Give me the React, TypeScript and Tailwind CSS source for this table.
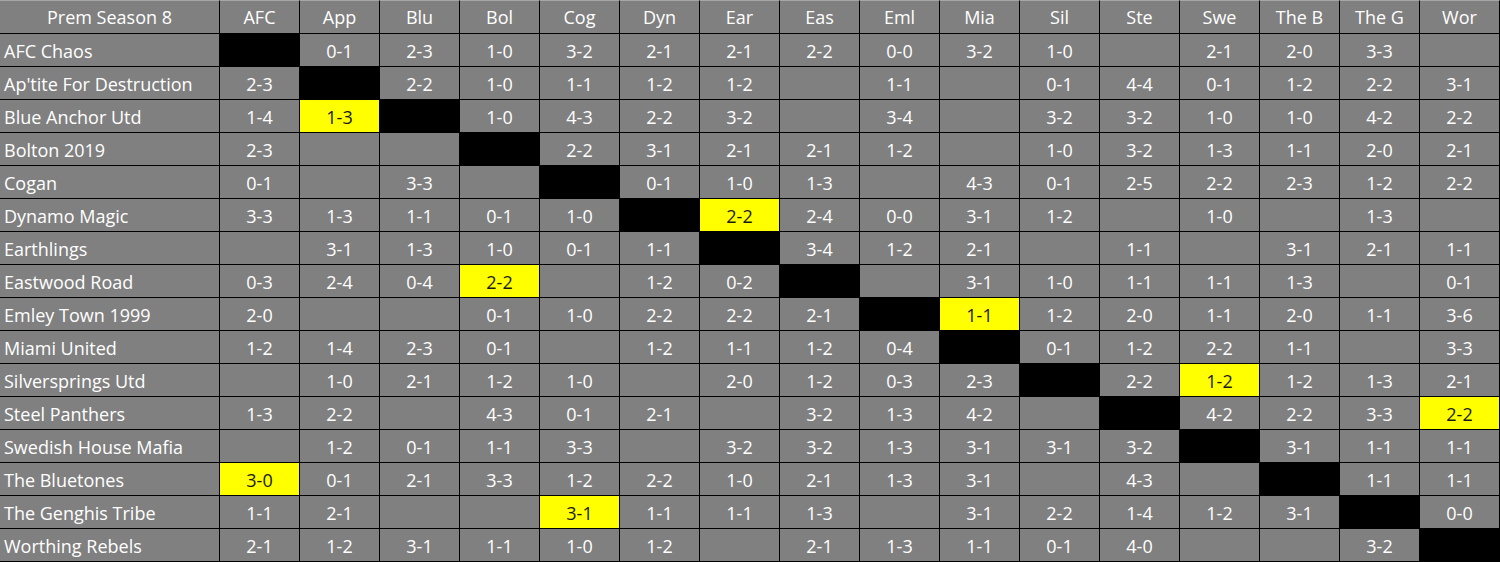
import { Fragment } from "react";

const heads = ["AFC", "App", "Blu", "Bol", "Cog", "Dyn", "Ear", "Eas", "Eml", "Mia", "Sil", "Ste", "Swe", "The B", "The G", "Wor"];

// "X" = own fixture (black), "*" suffix = highlighted yellow
const rows: [string, string[]][] = [
  ["AFC Chaos", ["X", "0-1", "2-3", "1-0", "3-2", "2-1", "2-1", "2-2", "0-0", "3-2", "1-0", "", "2-1", "2-0", "3-3", ""]],
  ["Ap'tite For Destruction", ["2-3", "X", "2-2", "1-0", "1-1", "1-2", "1-2", "", "1-1", "", "0-1", "4-4", "0-1", "1-2", "2-2", "3-1"]],
  ["Blue Anchor Utd", ["1-4", "1-3*", "X", "1-0", "4-3", "2-2", "3-2", "", "3-4", "", "3-2", "3-2", "1-0", "1-0", "4-2", "2-2"]],
  ["Bolton 2019", ["2-3", "", "", "X", "2-2", "3-1", "2-1", "2-1", "1-2", "", "1-0", "3-2", "1-3", "1-1", "2-0", "2-1"]],
  ["Cogan", ["0-1", "", "3-3", "", "X", "0-1", "1-0", "1-3", "", "4-3", "0-1", "2-5", "2-2", "2-3", "1-2", "2-2"]],
  ["Dynamo Magic", ["3-3", "1-3", "1-1", "0-1", "1-0", "X", "2-2*", "2-4", "0-0", "3-1", "1-2", "", "1-0", "", "1-3", ""]],
  ["Earthlings", ["", "3-1", "1-3", "1-0", "0-1", "1-1", "X", "3-4", "1-2", "2-1", "", "1-1", "", "3-1", "2-1", "1-1"]],
  ["Eastwood Road", ["0-3", "2-4", "0-4", "2-2*", "", "1-2", "0-2", "X", "", "3-1", "1-0", "1-1", "1-1", "1-3", "", "0-1"]],
  ["Emley Town 1999", ["2-0", "", "", "0-1", "1-0", "2-2", "2-2", "2-1", "X", "1-1*", "1-2", "2-0", "1-1", "2-0", "1-1", "3-6"]],
  ["Miami United", ["1-2", "1-4", "2-3", "0-1", "", "1-2", "1-1", "1-2", "0-4", "X", "0-1", "1-2", "2-2", "1-1", "", "3-3"]],
  ["Silversprings Utd", ["", "1-0", "2-1", "1-2", "1-0", "", "2-0", "1-2", "0-3", "2-3", "X", "2-2", "1-2*", "1-2", "1-3", "2-1"]],
  ["Steel Panthers", ["1-3", "2-2", "", "4-3", "0-1", "2-1", "", "3-2", "1-3", "4-2", "", "X", "4-2", "2-2", "3-3", "2-2*"]],
  ["Swedish House Mafia", ["", "1-2", "0-1", "1-1", "3-3", "", "3-2", "3-2", "1-3", "3-1", "3-1", "3-2", "X", "3-1", "1-1", "1-1"]],
  ["The Bluetones", ["3-0*", "0-1", "2-1", "3-3", "1-2", "2-2", "1-0", "2-1", "1-3", "3-1", "", "4-3", "", "X", "1-1", "1-1"]],
  ["The Genghis Tribe", ["1-1", "2-1", "", "", "3-1*", "1-1", "1-1", "1-3", "", "3-1", "2-2", "1-4", "1-2", "3-1", "X", "0-0"]],
  ["Worthing Rebels", ["2-1", "1-2", "3-1", "1-1", "1-0", "1-2", "", "2-1", "1-3", "1-1", "0-1", "4-0", "", "", "3-2", "X"]],
];

const ScoreCell = ({ v }: { v: string }) => {
  if (v === "X") return <div className="bg-black border-r border-b border-black" />;
  const hl = v.endsWith("*");
  return (
    <div
      className={`flex items-center justify-center pt-px border-r border-b border-black ${
        hl ? "bg-[#ffff00] text-[#1a1a1a]" : "bg-[#808080] text-white"
      }`}
    >
      {hl ? v.slice(0, -1) : v}
    </div>
  );
};

export default function App() {
  return (
    <div className="w-[1500px] h-[562px] bg-[#808080] overflow-hidden font-['Open_Sans',sans-serif] text-[18px] leading-none">
      <div className="grid grid-cols-[220px_repeat(16,80px)] grid-rows-[34px_repeat(16,33px)]">
        <div className="flex items-center justify-center border-r border-b border-black border-t border-t-[#a6a6a6] text-white">
          Prem Season 8
        </div>
        {heads.map((h) => (
          <div
            key={h}
            className="flex items-center justify-center border-r border-b border-black border-t border-t-[#a6a6a6] text-white"
          >
            {h}
          </div>
        ))}
        {rows.map(([team, scores]) => (
          <Fragment key={team}>
            <div className="flex items-center pl-1 pt-px border-r border-b border-black text-white whitespace-nowrap">
              {team}
            </div>
            {scores.map((s, i) => (
              <ScoreCell key={team + i} v={s} />
            ))}
          </Fragment>
        ))}
      </div>
    </div>
  );
}
